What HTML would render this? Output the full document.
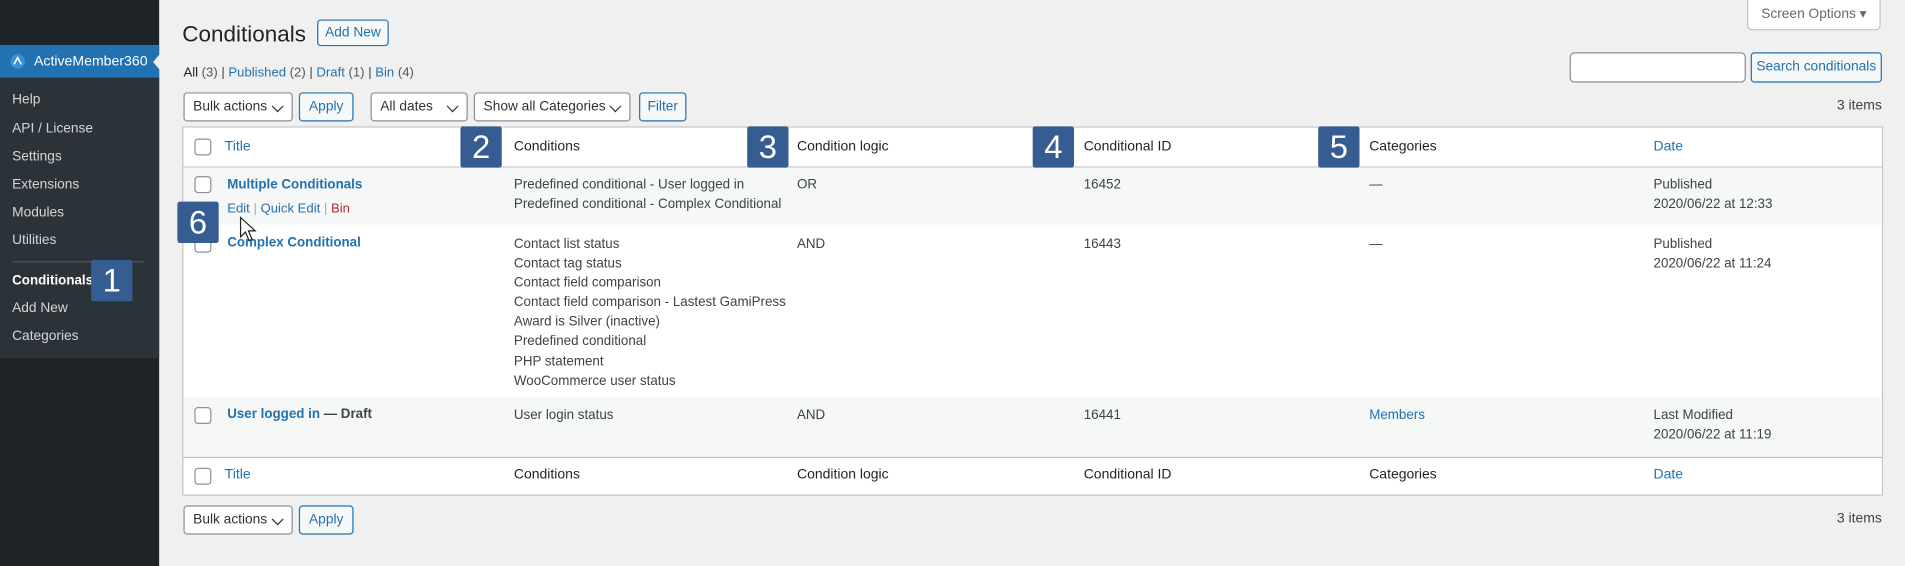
<!DOCTYPE html>
<html><head><meta charset="utf-8">
<style>
*{box-sizing:border-box;margin:0;padding:0}
html,body{width:1905px;height:565px;overflow:hidden;background:#f0f0f1}
#w{position:absolute;left:0;top:0;width:1568px;height:466px;transform:scale(1.21492);transform-origin:0 0;font-family:"Liberation Sans",sans-serif;font-size:11.5px;color:#3c434a}
.a{position:absolute;white-space:nowrap}
#sb{position:absolute;left:0;top:0;width:131px;height:466px;background:#1d2327}
#sub{position:absolute;left:0;top:64px;width:131px;height:231px;background:#2c3338}
#act{position:absolute;left:0;top:37px;width:131px;height:27px;background:#2271b1}
.mi{position:absolute;left:10px;color:#f0f0f1;font-size:11.3px;opacity:.85;white-space:nowrap}
.lk{color:#2271b1}
.btn{position:absolute;border:1px solid #2271b1;border-radius:3px;background:#f6f7f7;color:#2271b1;text-align:center;font-size:11.3px;white-space:nowrap}
.sel{position:absolute;border:1px solid #8c8f94;border-radius:3px;background:#fff;color:#2c3338;font-size:11.3px;padding-left:7px;white-space:nowrap}
.sel:after{content:"";position:absolute;right:8px;top:7px;width:6px;height:6px;border-right:1.5px solid #2c3338;border-bottom:1.5px solid #2c3338;transform:rotate(45deg)}
.cb{position:absolute;width:14px;height:14px;border:1px solid #8c8f94;border-radius:3px;background:#fff}
.bd{position:absolute;width:34px;height:34px;background:#355d91;color:#fff;font-size:27px;text-align:center;line-height:34px;border-radius:2px}
.t{font-size:11.5px}
.ln{font-size:11px;line-height:16.1px}
</style></head><body><div id="w">
<div id="sb"></div><div id="sub"></div><div id="act"></div>
<div style="position:absolute;left:126px;top:44px;width:0;height:0;border-top:7px solid transparent;border-bottom:7px solid transparent;border-right:6px solid #f0f0f1"></div>
<svg class="a" style="left:8px;top:44px" width="13" height="13" viewBox="0 0 13 13"><circle cx="6.5" cy="6.5" r="6" fill="#3b8fd6"/><path d="M3.5 9 L6.5 3.5 L9.5 9" stroke="#fff" stroke-width="1.3" fill="none"/></svg>
<div class="a" style="left:28px;top:44px;color:#fff;font-size:11.6px">ActiveMember360</div>
<div class="mi" style="top:76px">Help</div>
<div class="mi" style="top:100px">API / License</div>
<div class="mi" style="top:123px">Settings</div>
<div class="mi" style="top:146px">Extensions</div>
<div class="mi" style="top:169px">Modules</div>
<div class="mi" style="top:192px">Utilities</div>
<div class="a" style="left:10px;top:215px;width:108px;height:1px;background:#50575e"></div>
<div class="mi" style="top:225px;font-weight:bold;opacity:1;color:#fff;font-size:11px">Conditionals</div>
<div class="mi" style="top:248px">Add New</div>
<div class="mi" style="top:271px">Categories</div>

<div class="a" style="left:150px;top:17px;font-size:18.5px;color:#1d2327">Conditionals</div>
<div class="btn" style="left:261px;top:16px;width:59px;height:22px;line-height:20px">Add New</div>
<div class="a" style="left:1438px;top:-1px;width:110px;height:26px;background:#fff;border:1px solid #c3c4c7;border-radius:0 0 4px 4px;color:#646970;font-size:11.3px;line-height:24px;text-align:center">Screen Options ▾</div>
<div class="a" style="left:151px;top:54px;font-size:10.8px"><b style="color:#1d2327;font-weight:normal">All</b> <span style="color:#50575e">(3)</span> | <span class="lk">Published <span style="color:#50575e">(2)</span></span> | <span class="lk">Draft <span style="color:#50575e">(1)</span></span> | <span class="lk">Bin <span style="color:#50575e">(4)</span></span></div>
<div class="a" style="left:1292px;top:43px;width:145px;height:25px;background:#fff;border:1px solid #8c8f94;border-radius:4px"></div>
<div class="btn" style="left:1441px;top:43px;width:108px;height:25px;line-height:23px">Search conditionals</div>

<div class="sel" style="left:151px;top:76px;width:90px;height:24px;line-height:22px">Bulk actions</div>
<div class="btn" style="left:246px;top:76px;width:45px;height:24px;line-height:22px">Apply</div>
<div class="sel" style="left:305px;top:76px;width:80px;height:24px;line-height:22px">All dates</div>
<div class="sel" style="left:390px;top:76px;width:129px;height:24px;line-height:22px">Show all Categories</div>
<div class="btn" style="left:526px;top:76px;width:39px;height:24px;line-height:22px">Filter</div>
<div class="a t" style="right:19px;top:81px">3 items</div>

<div class="a" style="left:150px;top:104px;width:1400px;height:304px;border:1px solid #c3c4c7;background:#fff"></div>
<div class="a" style="left:151px;top:137px;width:1398px;height:1px;background:#c3c4c7"></div>
<div class="a" style="left:151px;top:138px;width:1398px;height:47px;background:#f6f7f7"></div>
<div class="a" style="left:151px;top:327px;width:1398px;height:49px;background:#f6f7f7"></div>
<div class="a" style="left:151px;top:376px;width:1398px;height:1px;background:#c3c4c7"></div>

<div class="cb" style="left:160px;top:114px"></div>
<div class="a t lk" style="left:185px;top:115px">Title</div>
<div class="a t" style="left:423px;top:115px;color:#1d2327">Conditions</div>
<div class="a t" style="left:656px;top:115px;color:#1d2327">Condition logic</div>
<div class="a t" style="left:892px;top:115px;color:#1d2327">Conditional ID</div>
<div class="a t" style="left:1127px;top:115px;color:#1d2327">Categories</div>
<div class="a t lk" style="left:1361px;top:115px">Date</div>

<div class="cb" style="left:160px;top:145px"></div>
<div class="a t lk" style="left:187px;top:146px;font-weight:bold;font-size:11px">Multiple Conditionals</div>
<div class="a" style="left:187px;top:166px;font-size:10.8px"><span class="lk">Edit</span> <span style="color:#a7aaad">|</span> <span class="lk">Quick Edit</span> <span style="color:#a7aaad">|</span> <span style="color:#b32d2e">Bin</span></div>
<div class="a ln" style="left:423px;top:144px">Predefined conditional - User logged in<br>Predefined conditional - Complex Conditional</div>
<div class="a ln" style="left:656px;top:144px">OR</div>
<div class="a ln" style="left:892px;top:144px">16452</div>
<div class="a ln" style="left:1127px;top:144px">—</div>
<div class="a ln" style="left:1361px;top:144px">Published<br>2020/06/22 at 12:33</div>

<div class="cb" style="left:160px;top:194px"></div>
<div class="a t lk" style="left:187px;top:194px;font-weight:bold;font-size:11px">Complex Conditional</div>
<div class="a ln" style="left:423px;top:193px">Contact list status<br>Contact tag status<br>Contact field comparison<br>Contact field comparison - Lastest GamiPress<br>Award is Silver (inactive)<br>Predefined conditional<br>PHP statement<br>WooCommerce user status</div>
<div class="a ln" style="left:656px;top:193px">AND</div>
<div class="a ln" style="left:892px;top:193px">16443</div>
<div class="a ln" style="left:1127px;top:193px">—</div>
<div class="a ln" style="left:1361px;top:193px">Published<br>2020/06/22 at 11:24</div>

<div class="cb" style="left:160px;top:335px"></div>
<div class="a t" style="left:187px;top:335px;font-weight:bold;font-size:11px;color:#3c434a"><span class="lk">User logged in</span> — Draft</div>
<div class="a ln" style="left:423px;top:334px">User login status</div>
<div class="a ln" style="left:656px;top:334px">AND</div>
<div class="a ln" style="left:892px;top:334px">16441</div>
<div class="a ln lk" style="left:1127px;top:334px">Members</div>
<div class="a ln" style="left:1361px;top:334px">Last Modified<br>2020/06/22 at 11:19</div>

<div class="cb" style="left:160px;top:385px"></div>
<div class="a t lk" style="left:185px;top:385px">Title</div>
<div class="a t" style="left:423px;top:385px;color:#1d2327">Conditions</div>
<div class="a t" style="left:656px;top:385px;color:#1d2327">Condition logic</div>
<div class="a t" style="left:892px;top:385px;color:#1d2327">Conditional ID</div>
<div class="a t" style="left:1127px;top:385px;color:#1d2327">Categories</div>
<div class="a t lk" style="left:1361px;top:385px">Date</div>

<div class="sel" style="left:151px;top:416px;width:90px;height:24px;line-height:22px">Bulk actions</div>
<div class="btn" style="left:246px;top:416px;width:45px;height:24px;line-height:22px">Apply</div>
<div class="a t" style="right:19px;top:421px">3 items</div>

<div class="bd" style="left:75px;top:214px">1</div>
<div class="bd" style="left:379px;top:104px">2</div>
<div class="bd" style="left:615px;top:104px">3</div>
<div class="bd" style="left:850px;top:104px">4</div>
<div class="bd" style="left:1085px;top:104px">5</div>
<div class="bd" style="left:146px;top:166px">6</div>

<svg class="a" style="left:197px;top:178px" width="14" height="22" viewBox="0 0 14 22"><path d="M1 1 L1 17 L5 13 L8 20 L10.5 19 L7.5 12 L13 12 Z" fill="#fff" stroke="#222" stroke-width="1"/></svg>
</div></body></html>
